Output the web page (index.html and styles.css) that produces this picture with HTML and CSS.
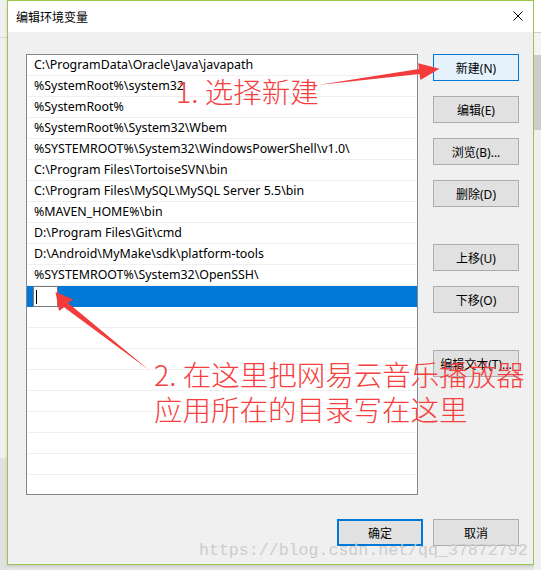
FILE: index.html
```html
<!DOCTYPE html>
<html lang="zh-CN">
<head>
<meta charset="utf-8">
<title>编辑环境变量</title>
<link rel="stylesheet" href="styles.css">
</head>
<body>
<div class="screen">
  <div class="side side-left">
    <div class="sl-top"></div>
    <div class="sl-mid"></div>
    <div class="sl-bottom"></div>
  </div>
  <div class="dialog">
    <div class="titlebar">
      <span class="title">编辑环境变量</span>
      <svg class="close" width="10" height="10" viewBox="0 0 10 10"><path d="M0.5 0.5 L9.5 9.5 M9.5 0.5 L0.5 9.5" stroke="#000" stroke-width="1" fill="none"/></svg>
    </div>
    <div class="body">
      <div class="list">
        <div class="row">C:\ProgramData\Oracle\Java\javapath</div>
        <div class="row">%SystemRoot%\system32</div>
        <div class="row">%SystemRoot%</div>
        <div class="row">%SystemRoot%\System32\Wbem</div>
        <div class="row">%SYSTEMROOT%\System32\WindowsPowerShell\v1.0\</div>
        <div class="row">C:\Program Files\TortoiseSVN\bin</div>
        <div class="row">C:\Program Files\MySQL\MySQL Server 5.5\bin</div>
        <div class="row">%MAVEN_HOME%\bin</div>
        <div class="row">D:\Program Files\Git\cmd</div>
        <div class="row">D:\Android\MyMake\sdk\platform-tools</div>
        <div class="row">%SYSTEMROOT%\System32\OpenSSH\</div>
        <div class="row selected"><span class="editbox"><span class="caret"></span></span></div>
        <div class="row"></div>
        <div class="row"></div>
        <div class="row"></div>
        <div class="row"></div>
        <div class="row"></div>
        <div class="row"></div>
        <div class="row"></div>
        <div class="row"></div>
        <div class="row"></div>
      </div>
      <div class="actions">
        <div class="group">
          <div class="btn focus">新建(N)</div>
          <div class="btn">编辑(E)</div>
          <div class="btn">浏览(B)...</div>
          <div class="btn">删除(D)</div>
        </div>
        <div class="group">
          <div class="btn">上移(U)</div>
          <div class="btn">下移(O)</div>
        </div>
        <div class="group">
          <div class="btn">编辑文本(T)...</div>
        </div>
      </div>
      <div class="footer">
        <div class="btn default">确定</div>
        <div class="btn">取消</div>
      </div>
    </div>
  </div>
  <div class="side side-right">
    <div class="sr-top"></div>
    <div class="sr-band"></div>
    <div class="sr-scroll"></div>
    <div class="sr-rest"></div>
  </div>

  <div class="watermark">https://blog.csdn.net/qq_37872792</div>
  <div class="note note1">1. 选择新建</div>
  <div class="note note2">2. 在这里把网易云音乐播放器<br>应用所在的目录写在这里</div>
  <svg class="arrows" width="541" height="570" viewBox="0 0 541 570">
    <polygon points="318,85 418.9,69.1 418.2,63.2 439.5,68.8 420.4,80 419.5,74.1" fill="#f33b3b"/>
    <polygon points="149,370 67.9,302.7 73.5,299.5 55.5,292 59,311 64.1,307.3" fill="#f33b3b"/>
  </svg>
</div>
</body>
</html>
```

FILE: styles.css
```css
* { box-sizing: border-box; }
html, body { margin: 0; padding: 0; }
body {
  font-family: "Noto Sans", "Noto Sans CJK SC", sans-serif;
  font-size: 12px;
  color: #000;
  background: #ececec;
}
.screen {
  position: relative;
  width: 541px;
  height: 570px;
  overflow: hidden;
  display: flex;
  background: #e8e8e8;
}
.side { width: 7px; display: flex; flex-direction: column; }
.sl-top { height: 38px; background: #f0f0f0; border-bottom: 1px solid #d9d9d9; }
.sl-mid { height: 420px; background: #f0f0f0; }
.sl-bottom { flex: 1; background: #e1e1e1; }
.sr-top { height: 33px; background: #ffffff; border-bottom: 1px solid #d0d0d0; }
.sr-band { height: 22px; background: #f3f3f3; }
.sr-scroll { height: 75px; background: #cdcdcd; }
.sr-rest { flex: 1; background: #f0f0f0; }

.dialog {
  width: 527px;
  height: 565px;
  border: 1px solid #9bc54f;
  background: #f0f0f0;
  display: flex;
  flex-direction: column;
  box-shadow: 0 2px 3px rgba(0,0,0,0.12);
}
.titlebar {
  height: 31px;
  background: #ffffff;
  display: flex;
  align-items: center;
  justify-content: space-between;
  padding: 0 10px 0 8px;
  flex: none;
}
.title {
  font-family: "Noto Sans CJK SC", sans-serif;
  font-size: 12px;
  line-height: 12px;
  margin-top: 1px;
}
.close { display: block; margin-top: -1px; }

.body {
  flex: 1;
  display: grid;
  grid-template-columns: 392px 86px;
  grid-template-rows: 441px auto;
  column-gap: 15px;
  padding: 22px 14px 18px 18px;
}
.list {
  border: 1px solid #828790;
  background: #ffffff;
  overflow: hidden;
  display: flex;
  flex-direction: column;
}
.row {
  flex: none;
  height: 21px;
  border-bottom: 1px solid #f0f0f0;
  padding-left: 7px;
  line-height: 20px;
  white-space: nowrap;
  font-size: 12.4px;
}
.row.selected {
  background: #0078d7;
  border-bottom-color: #0078d7;
  padding-left: 6px;
}
.editbox {
  display: block;
  width: 25px;
  height: 21px;
  background: #ffffff;
  border: 1px solid #7a7a7a;
  padding: 3px 0 0 2px;
}
.caret {
  display: block;
  width: 1px;
  height: 14px;
  background: #000;
}

.actions {
  display: flex;
  flex-direction: column;
  gap: 37px;
}
.group {
  display: flex;
  flex-direction: column;
  gap: 15px;
}
.btn {
  height: 27px;
  width: 86px;
  background: #e1e1e1;
  border: 1px solid #adadad;
  display: flex;
  align-items: center;
  justify-content: center;
  font-family: "Noto Sans", "Noto Sans CJK SC", sans-serif;
  font-size: 12px;
  white-space: nowrap;
}
.btn.focus {
  background: #e5f1fb;
  border-color: #0078d7;
}
.btn.default {
  border: 2px solid #0078d7;
}
.footer {
  grid-column: 1 / 3;
  display: flex;
  justify-content: flex-end;
  gap: 10px;
  margin-top: 24px;
}

.watermark {
  position: absolute;
  left: 199px;
  top: 541px;
  font-family: "Liberation Mono", monospace;
  font-size: 16.6px;
  line-height: 20px;
  color: #cdcdcd;
  white-space: nowrap;
}
.note {
  position: absolute;
  font-family: "Noto Sans CJK SC", sans-serif;
  font-weight: 300;
  font-size: 28.5px;
  color: #f5403f;
  white-space: nowrap;
}
.note1 { left: 176px; top: 74px; line-height: 34px; }
.note2 { left: 154px; top: 356px; line-height: 35px; }
.arrows {
  position: absolute;
  left: 0;
  top: 0;
  pointer-events: none;
}
```
